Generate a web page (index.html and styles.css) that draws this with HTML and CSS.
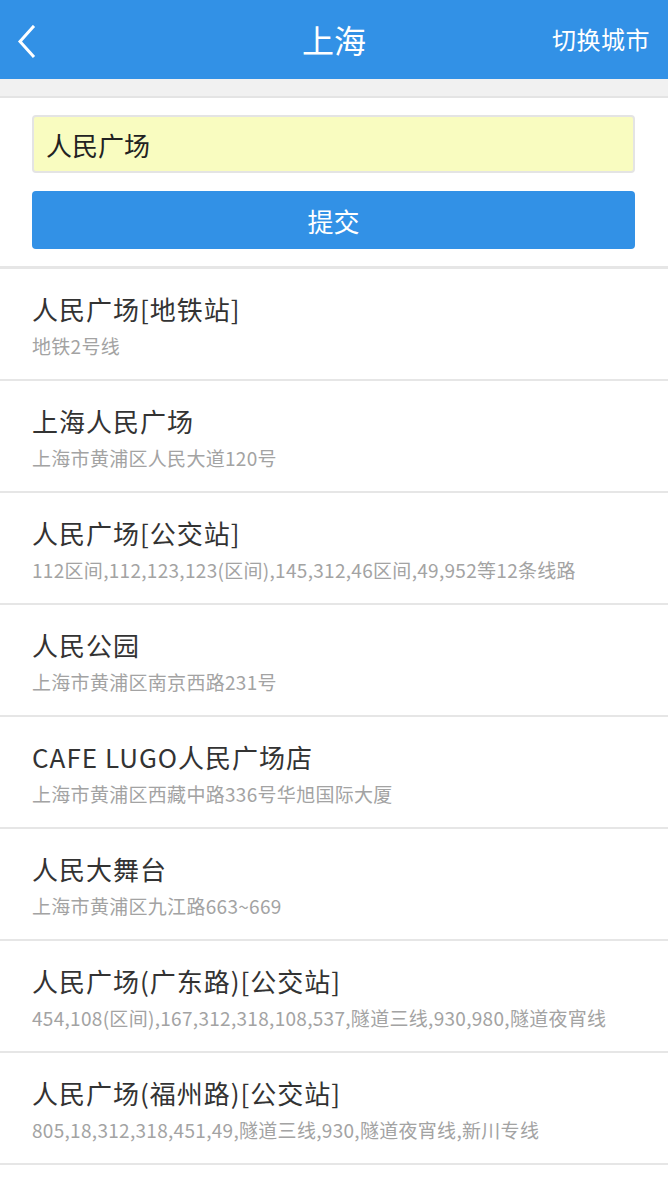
FILE: index.html
```html
<!DOCTYPE html>
<html lang="zh-CN">
<head>
<meta charset="utf-8">
<title>上海</title>
<link rel="stylesheet" href="styles.css">
</head>
<body>
<header class="topbar">
  <a class="back" href="#" aria-label="返回">
    <svg width="20" height="34" viewBox="0 0 20 34"><path d="M16 2 L3 16.5 L16 31" fill="none" stroke="#fff" stroke-width="3" stroke-linecap="square"/></svg>
  </a>
  <h1 class="title">上海</h1>
  <a class="switch" href="#">切换城市</a>
</header>
<div class="gap"></div>
<form class="search">
  <div class="input">人民广场</div>
  <button class="submit" type="button">提交</button>
</form>
<ul class="list">
  <li class="item"><div class="name">人民广场[地铁站]</div><div class="desc">地铁2号线</div></li>
  <li class="item"><div class="name">上海人民广场</div><div class="desc">上海市黄浦区人民大道120号</div></li>
  <li class="item"><div class="name">人民广场[公交站]</div><div class="desc">112区间,112,123,123(区间),145,312,46区间,49,952等12条线路</div></li>
  <li class="item"><div class="name">人民公园</div><div class="desc">上海市黄浦区南京西路231号</div></li>
  <li class="item"><div class="name">CAFE LUGO人民广场店</div><div class="desc">上海市黄浦区西藏中路336号华旭国际大厦</div></li>
  <li class="item"><div class="name">人民大舞台</div><div class="desc">上海市黄浦区九江路663~669</div></li>
  <li class="item"><div class="name">人民广场(广东路)[公交站]</div><div class="desc">454,108(区间),167,312,318,108,537,隧道三线,930,980,隧道夜宵线</div></li>
  <li class="item"><div class="name">人民广场(福州路)[公交站]</div><div class="desc">805,18,312,318,451,49,隧道三线,930,隧道夜宵线,新川专线</div></li>
</ul>
</body>
</html>
```

FILE: styles.css
```css
* { box-sizing: border-box; }
html, body { margin: 0; padding: 0; background: #fff; }
body {
  font-family: "Noto Sans CJK SC", "Noto Sans", sans-serif;
  width: 668px;
}
.topbar {
  height: 79px;
  background: #3291e6;
  display: flex;
  align-items: center;
  justify-content: space-between;
  padding: 0 18px 0 17px;
  position: relative;
}
.back { display: flex; width: 20px; height: 34px; margin-top: 4px; }
.title {
  position: absolute;
  left: 0; right: 0;
  margin: 0;
  text-align: center;
  color: #fff;
  font-size: 32px;
  font-weight: 400;
  line-height: 79px;
  pointer-events: none;
}
.switch {
  color: #fff;
  font-size: 24px;
  text-decoration: none;
  letter-spacing: 0.5px;
  margin-top: -2px;
}
.gap {
  height: 19px;
  background: #f1f1f1;
  border-bottom: 2px solid #e4e4e4;
}
.search {
  padding: 17px 33px 17px 32px;
  display: flex;
  flex-direction: column;
  gap: 18px;
  border-bottom: 3px solid #e6e6e6;
  margin: 0;
}
.input {
  height: 58px;
  background: #f9fcc0;
  border: 2px solid #e4e4e4;
  border-radius: 4px;
  font-size: 26px;
  color: #222;
  display: flex;
  align-items: center;
  padding-left: 12px;
}
.submit {
  height: 58px;
  border: 0;
  border-radius: 4px;
  background: #3291e6;
  color: #fff;
  font-family: inherit;
  font-size: 26px;
  padding: 0;
}
.list { list-style: none; margin: 0; padding: 0; }
.item {
  height: 112px;
  border-bottom: 2px solid #e6e6e6;
  padding: 22px 32px 0 32px;
}
.name {
  font-size: 26px;
  color: #333;
  line-height: 36px;
  letter-spacing: 1px;
}
.desc {
  font-size: 19px;
  color: #a3a3a3;
  line-height: 26px;
  margin-top: 6px;
  letter-spacing: 0.3px;
  white-space: nowrap;
}
```
